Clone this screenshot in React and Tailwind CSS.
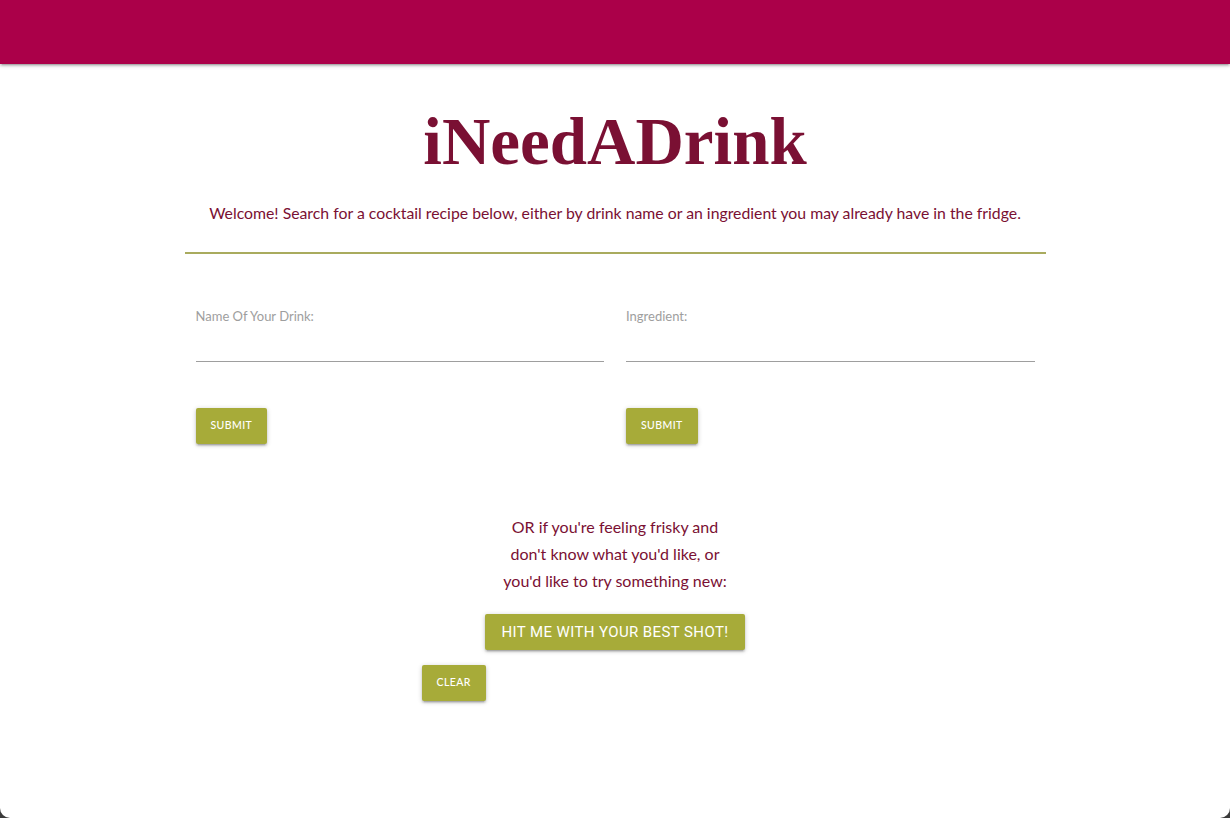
import React from 'react';

const body = { fontFamily: 'Lato, "Noto Sans", sans-serif' };

const SmallButton = ({ children }) => (
  <button className="h-[36px] rounded-[2px] bg-[#a7ab39] px-[15px] text-[10.5px] font-medium tracking-[0.4px] text-white uppercase shadow-[0_2px_2px_0_rgba(0,0,0,0.14),0_3px_1px_-2px_rgba(0,0,0,0.12),0_1px_5px_0_rgba(0,0,0,0.2)]">
    {children}
  </button>
);

const SearchField = ({ label }) => (
  <div className="flex flex-col px-[11px]">
    <label className="h-[16px] text-[13px] leading-[16px] text-[#9e9e9e]">{label}</label>
    <input type="text" className="h-[38px] w-full border-b border-[#9e9e9e] bg-transparent outline-none" />
    <div className="mt-[46px]">
      <SmallButton>Submit</SmallButton>
    </div>
  </div>
);

export default function App() {
  return (
    <div className="h-[818px] bg-[#3b3b3b]" style={body}>
      <div className="flex h-full flex-col overflow-hidden rounded-b-[10px] bg-white">
        <nav className="relative z-10 h-[64px] shrink-0 bg-[#ab0049] shadow-[0_2px_2px_0_rgba(0,0,0,0.14),0_3px_1px_-2px_rgba(0,0,0,0.12),0_1px_5px_0_rgba(0,0,0,0.2)]" />

        <div className="mx-auto w-[861px]">
          <h1
            className="mt-[40px] text-center text-[67px] leading-[74px] font-bold text-[#7a1033]"
            style={{ fontFamily: '"Liberation Serif", "DejaVu Serif", serif' }}
          >
            iNeedADrink
          </h1>
          <p className="mt-[23px] text-center text-[15.8px] leading-[24px] text-[#7a1033]">
            Welcome! Search for a cocktail recipe below, either by drink name or an ingredient you may already have in the fridge.
          </p>
          <div className="mt-[27px] h-[2px] bg-[#a9ab5e]" />

          <div className="mt-[54px] grid grid-cols-2">
            <SearchField label="Name Of Your Drink:" />
            <SearchField label="Ingredient:" />
          </div>

          <p className="mt-[69px] text-center text-[16px] leading-[27px] text-[#7a1033]">
            OR if you're feeling frisky and
            <br />
            don't know what you'd like, or
            <br />
            you'd like to try something new:
          </p>

          <div className="mt-[20px] flex justify-center">
            <button
              className="h-[36px] rounded-[2px] bg-[#a7ab39] px-4 text-[15px] tracking-[0.4px] text-white uppercase shadow-[0_2px_2px_0_rgba(0,0,0,0.14),0_3px_1px_-2px_rgba(0,0,0,0.12),0_1px_5px_0_rgba(0,0,0,0.2)]"
              style={{ fontFamily: 'Roboto, "Liberation Sans", sans-serif' }}
            >
              Hit me with your best shot!
            </button>
          </div>

          <div className="mt-[15px] pl-[237px]">
            <SmallButton>Clear</SmallButton>
          </div>
        </div>
      </div>
    </div>
  );
}
